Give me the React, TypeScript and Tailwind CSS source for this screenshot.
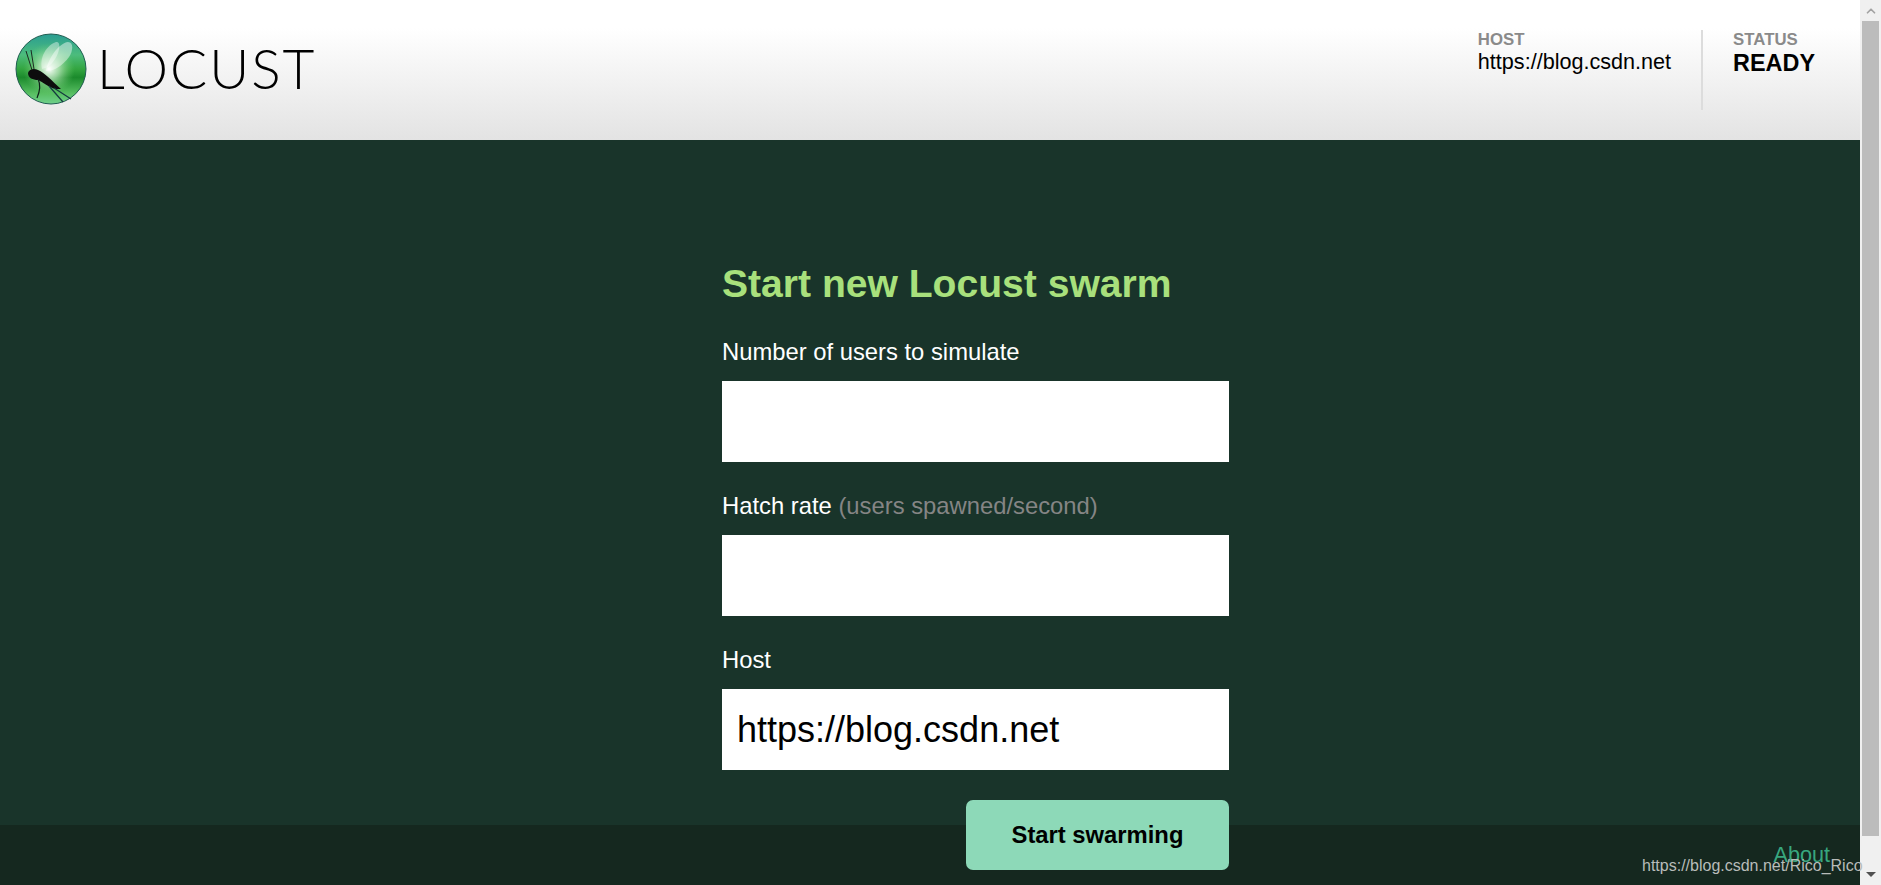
import { ChevronUp } from "lucide-react";

function LogoIcon() {
  return (
    <svg width="72" height="72" viewBox="0 0 72 72" className="shrink-0">
      <defs>
        <linearGradient id="orb" x1="0" y1="0" x2="0" y2="1">
          <stop offset="0" stopColor="#2a9d92" />
          <stop offset="0.3" stopColor="#4cbc7c" />
          <stop offset="0.5" stopColor="#33a540" />
          <stop offset="0.62" stopColor="#1b8a2c" />
          <stop offset="0.85" stopColor="#58bf62" />
          <stop offset="1" stopColor="#70d08c" />
        </linearGradient>
        <radialGradient id="glow" cx="0.5" cy="0.5" r="0.5">
          <stop offset="0" stopColor="#ffffff" stopOpacity="1" />
          <stop offset="0.4" stopColor="#d4f4d4" stopOpacity="0.65" />
          <stop offset="1" stopColor="#6fce6f" stopOpacity="0" />
        </radialGradient>
      </defs>
      <circle cx="36" cy="36" r="35" fill="url(#orb)" stroke="#1f5c50" strokeWidth="1" />
      <circle cx="34" cy="36" r="26" fill="url(#glow)" />
      <path d="M27 36 C24 24 32 12 41 9 C45 8 45 14 43 20 C40 28 34 35 27 36 Z" fill="#ffffff" opacity="0.4" />
      <path d="M31 38 C33 25 44 10 53 9 C59 9 58 18 54 24 C48 32 40 38 31 38 Z" fill="#ffffff" opacity="0.45" />
      <path d="M13 40 C14 36 19 35 23 37 C30 40 36 47 46 56 L40 56 C33 54 28 49 23 47 C18 47 13 45 13 40 Z" fill="#0d0d0d" />
      <path d="M17 37 L11 18 M19 36 L16 17" stroke="#1c2a22" strokeWidth="1" fill="none" />
      <path d="M23 46 C26 52 25 58 22 65" stroke="#10201a" strokeWidth="1.2" fill="none" />
      <path d="M39 55 L56 66 M34 53 L48 69" stroke="#153a40" strokeWidth="1.2" fill="none" />
    </svg>
  );
}

function Field({
  label,
  hint,
  value,
}: {
  label: string;
  hint?: string;
  value?: string;
}) {
  return (
    <div>
      <label className="block h-[73px] pt-[29px] text-[23.8px] leading-[30px] text-white">
        {label}
        {hint && <span className="text-[#858585]"> {hint}</span>}
      </label>
      <input
        type="text"
        defaultValue={value}
        className="block w-full h-[81px] bg-white px-[15px] text-[36px] text-black outline-none"
      />
    </div>
  );
}

export default function App() {
  return (
    <div className="relative flex h-screen w-full overflow-hidden bg-[#19342a] font-['Liberation_Sans',Arial,sans-serif]">
      <div className="relative flex-1 min-w-0">
        <header className="flex h-[140px] items-start justify-between bg-gradient-to-b from-white from-20% to-[#e3e3e3]">
          <div className="flex items-center pl-[15px] pt-[33px]">
            <LogoIcon />
            <span className="ml-[10px] -mt-[3px] font-['Lato',sans-serif] text-[55px] leading-[70px] font-light tracking-[2px] text-black">
              LOCUST
            </span>
          </div>
          <div className="flex pt-[30px]">
            <div className="pr-[30px]">
              <div className="text-[16.8px] leading-[20px] font-bold text-[#8a8a8a]">HOST</div>
              <div className="text-[21.6px] leading-[24px] text-black">https://blog.csdn.net</div>
            </div>
            <div className="h-[80px] w-[2px] bg-[#dcdcdc]" />
            <div className="pl-[30px] pr-[45px]">
              <div className="text-[16.8px] leading-[19px] font-bold text-[#8a8a8a]">STATUS</div>
              <div className="text-[23.4px] leading-[28px] font-bold text-black">READY</div>
            </div>
          </div>
        </header>

        <div className="relative z-10 ml-[722px] w-[507px] pt-[122px]">
          <h2 className="h-[46px] text-[39.1px] leading-[44px] font-bold text-[#a8e07c]">
            Start new Locust swarm
          </h2>
          <Field label="Number of users to simulate" />
          <Field label="Hatch rate" hint="(users spawned/second)" />
          <Field label="Host" value="https://blog.csdn.net" />
          <div className="flex justify-end pt-[30px]">
            <button className="h-[70px] w-[263px] rounded-[7px] bg-[#8dd9b8] text-[23.8px] font-bold text-black">
              Start swarming
            </button>
          </div>
        </div>

        <footer className="absolute bottom-0 left-0 right-0 flex h-[60px] justify-end bg-[#15281f] pr-[30px] pt-[17px]">
          <a className="text-[21.6px] leading-[26px] text-[#38a77f]">About</a>
        </footer>
      </div>

      <div className="relative flex w-[21px] shrink-0 flex-col items-center bg-[#f0f0f0]">
        <div className="flex h-[21px] items-center justify-center text-[#a3a3a3]">
          <ChevronUp size={14} strokeWidth={3} />
        </div>
        <div className="h-[815px] w-[17px] bg-[#bcbcbc]" />
        <div className="mt-auto flex h-[21px] items-center justify-center">
          <div className="h-0 w-0 border-x-[5px] border-t-[5px] border-x-transparent border-t-[#505050]" />
        </div>
      </div>

      <span className="absolute left-[1642px] top-[855px] z-20 whitespace-nowrap text-[16px] leading-[22px] text-[#b8bcba]">
        https://blog.csdn.net/Rico_Rico
      </span>
    </div>
  );
}
